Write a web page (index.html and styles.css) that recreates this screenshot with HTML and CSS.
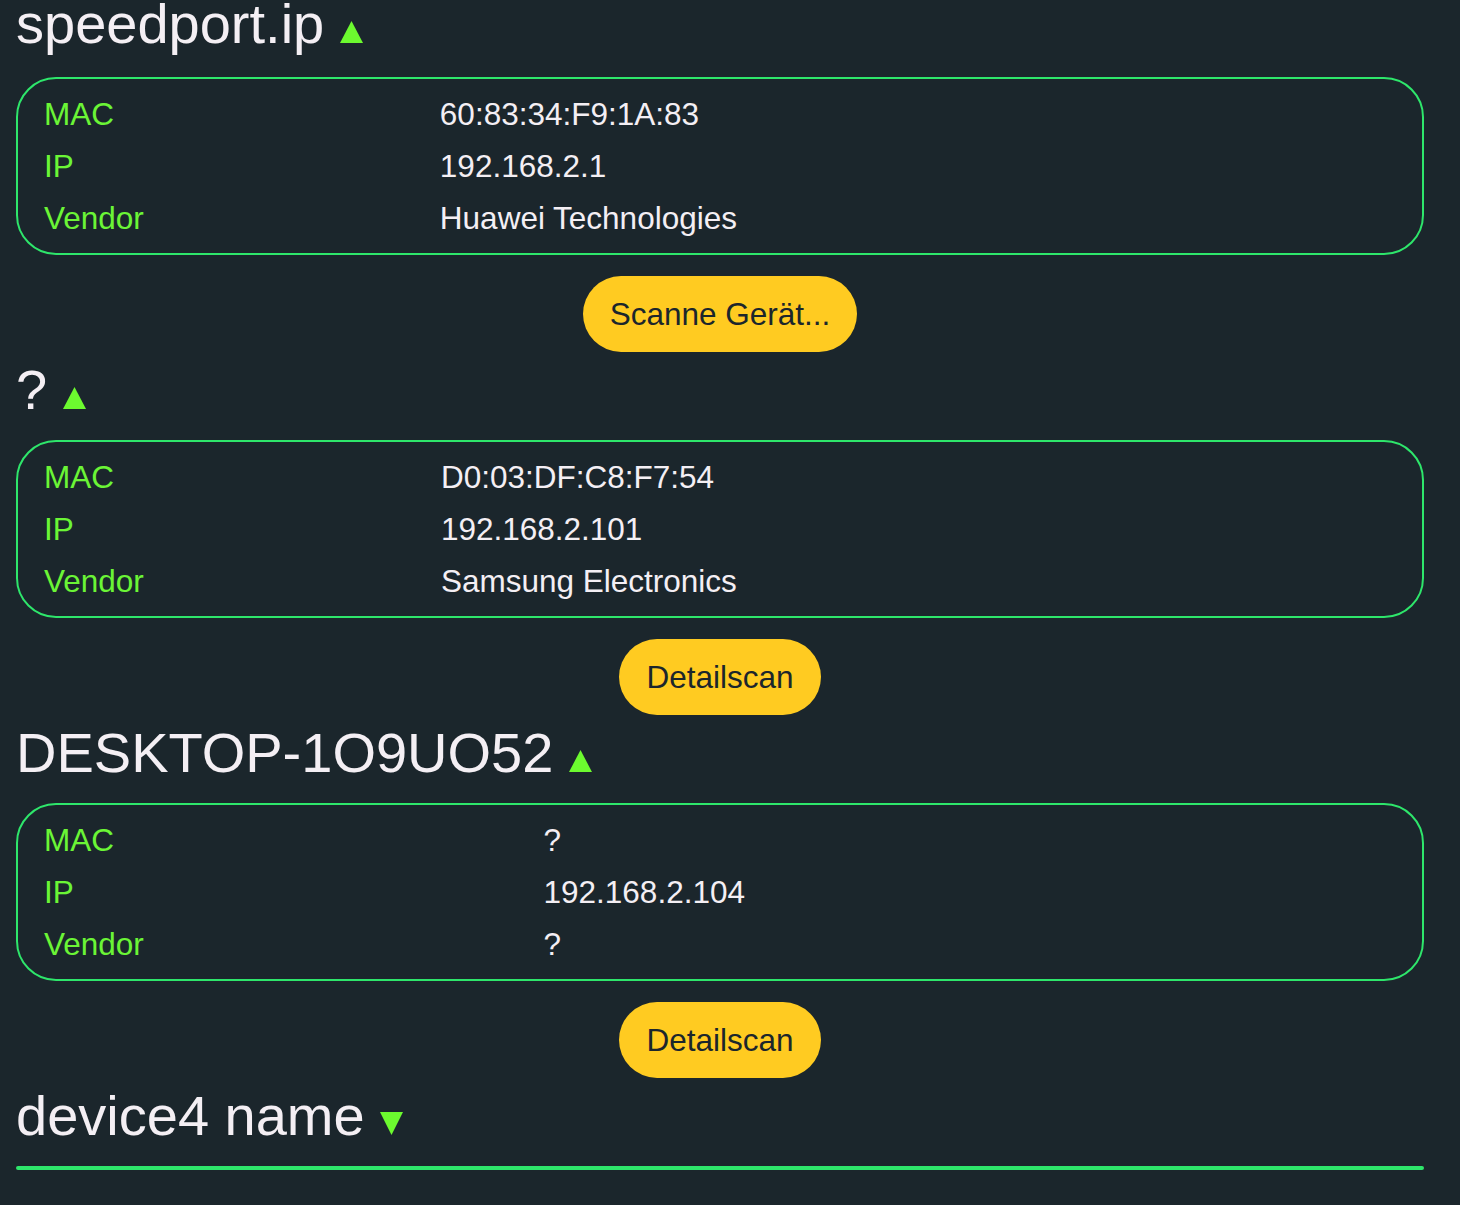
FILE: index.html
```html
<!DOCTYPE html>
<html lang="de">
<head>
<meta charset="utf-8">
<title>Geräte</title>
<link rel="stylesheet" href="styles.css">
</head>
<body>
<main class="devices">
  <section class="device device--first">
    <h2 class="device__name">speedport.ip <svg class="tri" viewBox="0 0 23 22" width="23" height="22"><polygon points="11.5,0 23,22 0,22"/></svg></h2>
    <div class="card">
      <table class="info">
        <tr><td class="label">MAC</td><td class="value">60:83:34:F9:1A:83</td></tr>
        <tr><td class="label">IP</td><td class="value">192.168.2.1</td></tr>
        <tr><td class="label">Vendor</td><td class="value">Huawei Technologies</td></tr>
      </table>
    </div>
    <div class="actions"><button class="btn">Scanne Gerät...</button></div>
  </section>

  <section class="device">
    <h2 class="device__name">? <svg class="tri" viewBox="0 0 23 22" width="23" height="22"><polygon points="11.5,0 23,22 0,22"/></svg></h2>
    <div class="card">
      <table class="info">
        <tr><td class="label">MAC</td><td class="value">D0:03:DF:C8:F7:54</td></tr>
        <tr><td class="label">IP</td><td class="value">192.168.2.101</td></tr>
        <tr><td class="label">Vendor</td><td class="value">Samsung Electronics</td></tr>
      </table>
    </div>
    <div class="actions"><button class="btn">Detailscan</button></div>
  </section>

  <section class="device">
    <h2 class="device__name">DESKTOP-1O9UO52 <svg class="tri" viewBox="0 0 23 22" width="23" height="22"><polygon points="11.5,0 23,22 0,22"/></svg></h2>
    <div class="card">
      <table class="info">
        <tr><td class="label">MAC</td><td class="value">?</td></tr>
        <tr><td class="label">IP</td><td class="value">192.168.2.104</td></tr>
        <tr><td class="label">Vendor</td><td class="value">?</td></tr>
      </table>
    </div>
    <div class="actions"><button class="btn">Detailscan</button></div>
  </section>

  <section class="device">
    <h2 class="device__name">device4 name <svg class="tri" viewBox="0 0 23 23" width="23" height="23"><polygon points="0,0 23,0 11.5,23"/></svg></h2>
    <div class="card card--collapsed"></div>
  </section>
</main>
</body>
</html>
```

FILE: styles.css
```css
html, body {
  margin: 0;
  padding: 0;
  background: #1b262c;
}

body {
  font-family: "Liberation Sans", Arial, sans-serif;
  font-size: 31.5px;
  color: #f4eff4;
  overflow: hidden;
}

.devices {
  width: 1408px;
  margin: 0 0 0 16px;
}

.device__name {
  margin: 0;
  font-size: 56px;
  line-height: 64px;
  font-weight: normal;
  color: #f4eff4;
  white-space: nowrap;
}

.device--first .device__name {
  line-height: 48px;
}

.tri {
  fill: #6cfa2f;
  vertical-align: baseline;
}

.card {
  margin-top: 18px;
  border: 2px solid #2ee66b;
  border-radius: 40px;
  padding: 9px 10px;
}

.device--first .card {
  margin-top: 29px;
}

.card--collapsed {
  padding: 0;
  height: 0;
  border-radius: 2px;
}

.info {
  width: 100%;
  border-collapse: separate;
  border-spacing: 0;
}

.info td {
  padding: 8px 16px;
  line-height: 36px;
  font-size: 31.5px;
  white-space: nowrap;
}

.label {
  color: #6bf536;
}

.value {
  color: #f4eff4;
}

.actions {
  display: flex;
  justify-content: center;
  margin-top: 21px;
  margin-bottom: 6px;
}

.btn {
  font-family: "Liberation Sans", Arial, sans-serif;
  font-size: 31.5px;
  line-height: 36px;
  padding: 20px 27px;
  border: none;
  border-radius: 38px;
  background: #ffcb21;
  color: #1b262c;
}
```
